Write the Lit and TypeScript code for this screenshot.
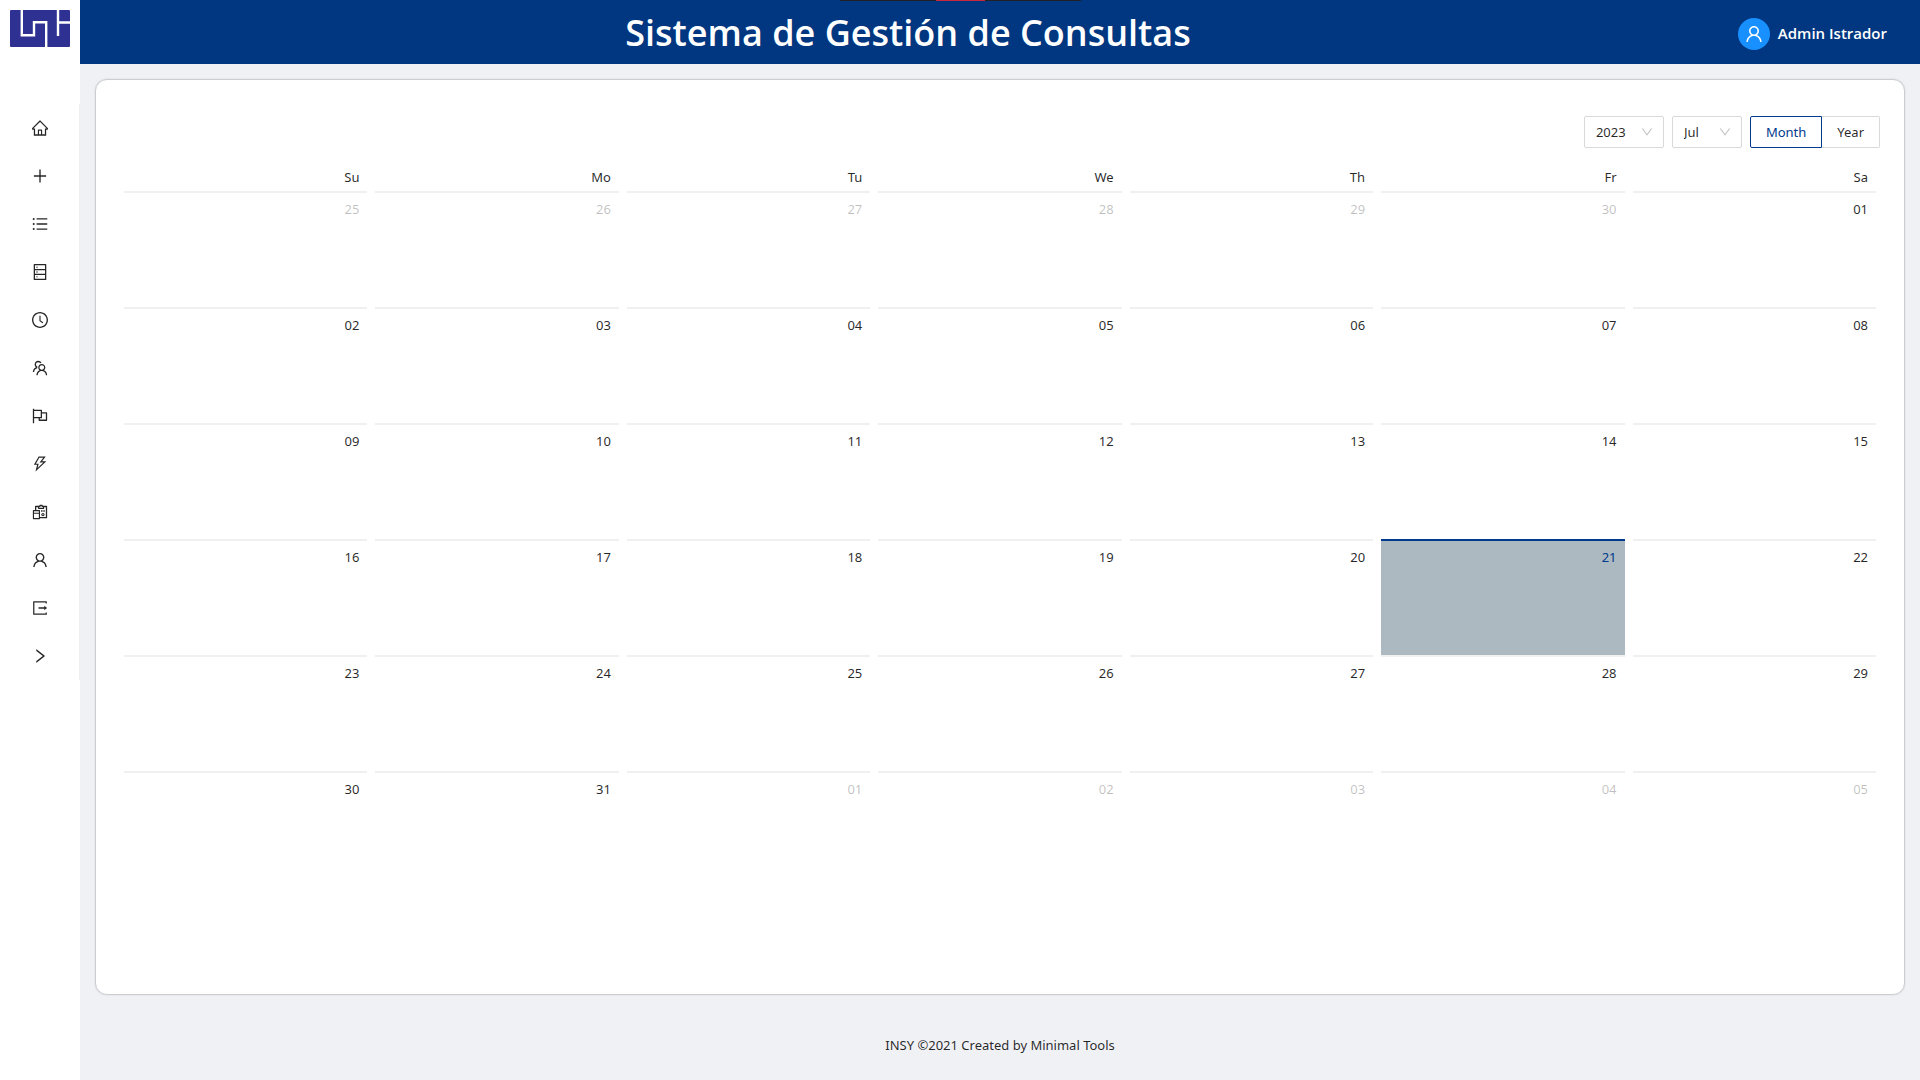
import { LitElement, html, css, svg } from "lit";
import { customElement, property, state } from "lit/decorators.js";
import { classMap } from "lit/directives/class-map.js";

const ICONS: Record<string, string> = {
  home: "M946.5 505L560.1 118.8l-25.9-25.9a31.5 31.5 0 00-44.4 0L77.5 505a63.9 63.9 0 00-18.8 46c.4 35.2 29.7 63.3 64.9 63.3h42.5V940h691.8V614.3h43.4c17.1 0 33.2-6.7 45.3-18.8a63.6 63.6 0 0018.7-45.3c0-17-6.7-33.1-18.8-45.2zM568 868H456V664h112v204zm217.9-325.7V868H632V640c0-22.1-17.9-40-40-40H432c-22.1 0-40 17.9-40 40v228H238.1V542.3h-96l370-369.7 23.1 23.1L882 542.3h-96.1z",
  plus: "M482 152h60q8 0 8 8v704q0 8-8 8h-60q-8 0-8-8V160q0-8 8-8z M176 474h672q8 0 8 8v60q0 8-8 8H176q-8 0-8-8v-60q0-8 8-8z",
  list: "M912 192H328c-4.4 0-8 3.6-8 8v56c0 4.4 3.6 8 8 8h584c4.4 0 8-3.6 8-8v-56c0-4.4-3.6-8-8-8zm0 284H328c-4.4 0-8 3.6-8 8v56c0 4.4 3.6 8 8 8h584c4.4 0 8-3.6 8-8v-56c0-4.4-3.6-8-8-8zm0 284H328c-4.4 0-8 3.6-8 8v56c0 4.4 3.6 8 8 8h584c4.4 0 8-3.6 8-8v-56c0-4.4-3.6-8-8-8zM104 228a56 56 0 10112 0 56 56 0 10-112 0zm0 284a56 56 0 10112 0 56 56 0 10-112 0zm0 284a56 56 0 10112 0 56 56 0 10-112 0z",
  database: "M832 64H192c-17.7 0-32 14.3-32 32v832c0 17.7 14.3 32 32 32h640c17.7 0 32-14.3 32-32V96c0-17.7-14.3-32-32-32zm-600 72h560v208H232V136zm560 480H232V408h560v208zm0 272H232V680h560v208zM304 240a40 40 0 1080 0 40 40 0 10-80 0zm0 272a40 40 0 1080 0 40 40 0 10-80 0zm0 272a40 40 0 1080 0 40 40 0 10-80 0z",
  clock: "M512 64C264.6 64 64 264.6 64 512s200.6 448 448 448 448-200.6 448-448S759.4 64 512 64zm0 820c-205.4 0-372-166.6-372-372s166.6-372 372-372 372 166.6 372 372-166.6 372-372 372z M686.7 638.6L544.1 535.5V288c0-4.4-3.6-8-8-8H488c-4.4 0-8 3.6-8 8v275.4c0 2.6 1.2 5 3.3 6.5l165.4 120.6c3.6 2.6 8.6 1.8 11.2-1.7l28.6-39c2.6-3.7 1.8-8.7-1.8-11.2z",
  team: "M824.2 699.9a301.55 301.55 0 00-86.4-60.4C783.1 602.8 812 546.8 812 484c0-110.8-92.4-201.7-203.2-200-109.1 1.7-197 90.6-197 200 0 62.8 29 118.8 74.2 155.5a300.95 300.95 0 00-86.4 60.4C345 754.6 314 826.8 312 903.8a8 8 0 008 8.2h56c4.3 0 7.9-3.4 8-7.7 1.9-58 25.4-112.3 66.7-153.5A226.62 226.62 0 01612 684c60.9 0 118.2 23.7 161.3 66.8C814.6 792 838 846.3 840 904.3c.1 4.3 3.7 7.7 8 7.7h56a8 8 0 008-8.2c-2-77-33-149.2-87.8-203.9zM612 612c-34.2 0-66.4-13.3-90.5-37.5a126.86 126.86 0 01-37.5-91.8c.3-32.8 13.4-64.5 36.3-88 24-24.6 56.1-38.3 90.4-38.7 33.9-.3 66.8 12.9 91 36.6 24.8 24.3 38.4 56.8 38.4 91.4 0 34.2-13.3 66.3-37.5 90.5A127.3 127.3 0 01612 612zM361.5 510.4c-.9-8.7-1.4-17.5-1.4-26.4 0-15.9 1.5-31.4 4.3-46.5.7-3.6-1.2-7.3-4.5-8.8-13.6-6.1-26.1-14.5-36.9-25.1a127.54 127.54 0 01-38.7-95.4c.9-32.1 13.8-62.6 36.3-85.6 24.7-25.3 57.9-39.1 93.2-38.7 31.9.3 62.7 12.6 86 34.4 7.9 7.4 14.7 15.6 20.4 24.4 2 3.1 5.9 4.4 9.3 3.2 17.6-6.1 36.2-10.4 55.3-12.4 5.6-.6 8.8-6.6 6.3-11.6-32.5-64.3-98.9-108.7-175.7-109.9-110.9-1.7-203.3 89.2-203.3 199.9 0 62.8 28.9 118.8 74.2 155.5-31.8 14.7-61.1 35-86.5 60.4-54.8 54.7-85.8 126.9-87.8 204a8 8 0 008 8.2h56.1c4.3 0 7.9-3.4 8-7.7 1.9-58 25.4-112.3 66.7-153.5 29.4-29.4 65.4-49.8 104.7-59.7 3.9-1 6.5-4.7 6-8.7z",
  flag: "M880 305H624V192c0-17.7-14.3-32-32-32H184v-40c0-4.4-3.6-8-8-8h-56c-4.4 0-8 3.6-8 8v784c0 4.4 3.6 8 8 8h56c4.4 0 8-3.6 8-8V640h248v113c0 17.7 14.3 32 32 32h416c17.7 0 32-14.3 32-32V337c0-17.7-14.3-32-32-32zM184 568V232h368v336H184zm656 145H504v-73h112c4.4 0 8-3.6 8-8V377h216v336z",
  bolt: "M848 359.3H627.7L825.8 109c4.1-5.3.4-13-6.3-13H436c-2.8 0-5.5 1.5-6.9 4L170 547.5c-3.1 5.3.7 12 6.9 12h174.4l-89.4 357.6c-1.9 7.8 7.5 13.3 13.3 7.7L853.5 373c5.2-4.9 1.7-13.7-5.5-13.7zM378.2 732.5l60.3-241H281.1l189.6-327.4h224.6L487 427.4h211L378.2 732.5z",
  reconciliation: "M676 565c-50.8 0-92 41.2-92 92s41.2 92 92 92 92-41.2 92-92-41.2-92-92-92zm0 126c-18.8 0-34-15.2-34-34s15.2-34 34-34 34 15.2 34 34-15.2 34-34 34zm204-523H668c0-30.9-25.1-56-56-56h-80c-30.9 0-56 25.1-56 56H264c-17.7 0-32 14.3-32 32v200h-88c-17.7 0-32 14.3-32 32v448c0 17.7 14.3 32 32 32h336c17.7 0 32-14.3 32-32v-16h368c17.7 0 32-14.3 32-32V200c0-17.7-14.3-32-32-32zm-412 64h72v-56h64v56h72v48H468v-48zm-20 616H176V616h272v232zm0-296H176v-88h272v88zm392 240H512V432c0-17.7-14.3-32-32-32H304V240h100v104h336V240h100v552zM704 408v96c0 4.4 3.6 8 8 8h48c4.4 0 8-3.6 8-8v-96c0-4.4-3.6-8-8-8h-48c-4.4 0-8 3.6-8 8zM592 512h48c4.4 0 8-3.6 8-8v-96c0-4.4-3.6-8-8-8h-48c-4.4 0-8 3.6-8 8v96c0 4.4 3.6 8 8 8z",
  user: "M858.5 763.6a374 374 0 00-80.6-119.5 375.63 375.63 0 00-119.5-80.6c-.4-.2-.8-.3-1.2-.5C719.5 518 760 444.7 760 362c0-137-111-248-248-248S264 225 264 362c0 82.7 40.5 156 102.8 201.1-.4.2-.8.3-1.2.5-44.8 18.9-85 46-119.5 80.6a375.63 375.63 0 00-80.6 119.5A371.7 371.7 0 00136 901.8a8 8 0 008 8.2h60c4.4 0 7.9-3.5 8-7.8 2-77.2 33-149.5 87.8-204.3 56.7-56.7 132-87.9 212.2-87.9s155.5 31.2 212.2 87.9C779 752.7 810 825 812 902.2c.1 4.4 3.6 7.8 8 7.8h60a8 8 0 008-8.2c-1-47.8-10.9-94.3-29.5-138.2zM512 534c-45.9 0-89.1-17.9-121.6-50.4S340 407.9 340 362c0-45.9 17.9-89.1 50.4-121.6S466.1 190 512 190s89.1 17.9 121.6 50.4S684 316.1 684 362c0 45.9-17.9 89.1-50.4 121.6S557.9 534 512 534z",
  export: "M888.3 757.4h-53.8c-4.2 0-7.7 3.5-7.7 7.7v61.8H197.1V197.1h629.8v61.8c0 4.2 3.5 7.7 7.7 7.7h53.8c4.2 0 7.7-3.4 7.7-7.7V158.7c0-17-13.7-30.7-30.7-30.7H158.7c-17 0-30.7 13.7-30.7 30.7v706.6c0 17 13.7 30.7 30.7 30.7h706.6c17 0 30.7-13.7 30.7-30.7V765.1c0-4.3-3.5-7.7-7.7-7.7zm18.6-251.7L765 393.7c-5.3-4.2-13-.4-13 6.3v76H438c-4.4 0-8 3.6-8 8v56c0 4.4 3.6 8 8 8h314v76c0 6.7 7.8 10.5 13 6.3l141.9-112a8 8 0 000-12.6z",
  right: "M765.7 486.8L314.9 134.7A7.97 7.97 0 00302 141v77.3c0 4.9 2.3 9.6 6.1 12.6l360 281.1-360 281.1c-3.9 3-6.1 7.7-6.1 12.6V883c0 6.7 7.7 10.4 12.9 6.3l450.8-352.1a31.96 31.96 0 000-50.4z",
  down: "M884 256h-75c-5.1 0-9.9 2.5-12.9 6.6L512 654.2 227.9 262.6c-3-4.1-7.8-6.6-12.9-6.6h-75c-6.5 0-10.3 7.4-6.5 12.7l352.6 486.1c12.8 17.6 39 17.6 51.7 0l352.6-486.1c3.9-5.3.1-12.7-6.4-12.7z",
};

const icon = (name: string) => html`
  <svg class="icon" viewBox="64 64 896 896" fill="currentColor" aria-hidden="true">
    ${svg`<path d=${ICONS[name]}></path>`}
  </svg>
`;

@customElement("side-nav")
export class SideNav extends LitElement {
  static styles = css`
    :host {
      display: block;
      background: #fff;
    }
    .logo {
      display: block;
      width: 60px;
      height: 37px;
      margin: 10px 10px 57px;
    }
    .menu {
      list-style: none;
      margin: 0;
      padding: 0;
      border-right: 1px solid #f0f0f0;
    }
    .link {
      display: flex;
      align-items: center;
      justify-content: center;
      width: 100%;
      height: 48px;
      padding: 0 0 0 1px;
      box-sizing: border-box;
      border: 0;
      background: none;
      color: rgba(0, 0, 0, 0.85);
      cursor: pointer;
    }
    .icon {
      width: 16px;
      height: 16px;
    }
  `;

  private links = [
    ["home", "Inicio"],
    ["plus", "Nueva consulta"],
    ["list", "Consultas"],
    ["database", "Registros"],
    ["clock", "Horarios"],
    ["team", "Grupos"],
    ["flag", "Reportes"],
    ["bolt", "Actividades"],
    ["reconciliation", "Asignaturas"],
    ["user", "Perfil"],
    ["export", "Salir"],
  ];

  render() {
    return html`
      <svg class="logo" viewBox="0 0 60 37" role="img" aria-label="UNI">
        <rect width="60" height="37" rx="1" fill="#2e3192"></rect>
        <g fill="none" stroke="#fff" stroke-width="2.400">
          <path d="M11.800 0V25.300H24V12.200H36.200V37"></path>
          <path d="M48 0V26M48 12.500H60"></path>
        </g>
      </svg>
      <nav>
        <ul class="menu">
          ${this.links.map(
            ([name, label]) => html`
              <li><a class="link" href="#${name}" aria-label=${label}>${icon(name)}</a></li>
            `
          )}
          <li><button class="link" type="button" aria-label="Expandir">${icon("right")}</button></li>
        </ul>
      </nav>
    `;
  }
}

@customElement("top-bar")
export class TopBar extends LitElement {
  static styles = css`
    :host {
      position: relative;
      display: grid;
      grid-template-columns: 9fr 1fr;
      align-items: center;
      height: 64px;
      padding-top: 2px;
      box-sizing: border-box;
      background: #003780;
      color: #fff;
      font-family: "Open Sans", "Noto Sans", sans-serif;
    }
    .title {
      margin: 0;
      text-align: center;
      font-size: 36px;
      line-height: 44px;
      font-weight: 600;
      white-space: nowrap;
    }
    .user {
      display: flex;
      align-items: center;
      justify-content: flex-end;
      gap: 8px;
      padding-right: 33px;
      font-size: 15px;
      font-weight: 600;
      white-space: nowrap;
    }
    .avatar {
      display: grid;
      place-items: center;
      width: 32px;
      height: 32px;
      margin-top: 2px;
      border-radius: 50%;
      background: #1890ff;
    }
    .icon {
      width: 18px;
      height: 18px;
    }
    .handle {
      position: absolute;
      top: 0;
      left: calc(50% - 160px);
      width: 241px;
      height: 1px;
      background: linear-gradient(to right, #202124 40%, #c8283c 40% 60%, #202124 60%);
    }
  `;

  render() {
    return html`
      <div class="handle"></div>
      <h1 class="title">Sistema de Gestión de Consultas</h1>
      <div class="user">
        <span class="avatar">${icon("user")}</span>
        <span>Admin Istrador</span>
      </div>
    `;
  }
}

@customElement("month-calendar")
export class MonthCalendar extends LitElement {
  @property({ type: Number }) year = 2023;
  @property({ type: Number }) month = 6;
  @property({ type: Number }) selected = 21;
  @state() private mode = "Month";

  static styles = css`
    :host {
      display: block;
    }
    .toolbar {
      display: flex;
      justify-content: flex-end;
      gap: 8px;
      padding: 12px 0;
    }
    .picker {
      display: grid;
      align-items: center;
      width: 80px;
    }
    .picker.short {
      width: 70px;
    }
    .select,
    .picker .icon {
      grid-area: 1 / 1;
    }
    .select {
      appearance: none;
      width: 100%;
      height: 32px;
      margin: 0;
      padding: 0 11px;
      border: 1px solid #d9d9d9;
      border-radius: 2px;
      background: #fff;
      color: rgba(0, 0, 0, 0.85);
      font: inherit;
    }
    .picker .icon {
      justify-self: end;
      width: 12px;
      height: 12px;
      margin-right: 11px;
      color: rgba(0, 0, 0, 0.25);
      pointer-events: none;
    }
    .modes {
      display: flex;
      margin: 0;
      padding: 0;
      border: 0;
    }
    .mode {
      display: flex;
      align-items: center;
      height: 32px;
      padding: 0 15px;
      box-sizing: border-box;
      border: 1px solid #d9d9d9;
      border-radius: 0 2px 2px 0;
      cursor: pointer;
    }
    .mode:first-of-type {
      border-radius: 2px 0 0 2px;
    }
    .mode + .mode {
      border-left: 0;
    }
    .mode.on {
      border: 1px solid #003a8c;
      color: #003a8c;
    }
    .radio {
      appearance: none;
      width: 0;
      height: 0;
      margin: 0;
    }
    .grid {
      width: 100%;
      margin: 8px 0;
      border-collapse: collapse;
      table-layout: fixed;
    }
    .weekday {
      padding: 0 12px 5px 0;
      line-height: 18px;
      font-weight: 400;
      text-align: right;
    }
    .day {
      padding: 0;
    }
    .date {
      height: 116px;
      margin: 0 4px;
      padding: 4px 8px 0;
      box-sizing: border-box;
      border-top: 2px solid #f0f0f0;
      line-height: 24px;
      text-align: right;
    }
    .outside {
      color: rgba(0, 0, 0, 0.25);
    }
    .current {
      border-color: #003a8c;
      background: #adb9c1;
      color: #003a8c;
    }
  `;

  private get weeks() {
    const lead = new Date(this.year, this.month, 1).getDay();
    return Array.from({ length: 6 }, (_, w) =>
      Array.from({ length: 7 }, (_, d) => new Date(this.year, this.month, 1 - lead + w * 7 + d))
    );
  }

  private dayCell(date: Date) {
    const outside = date.getMonth() !== this.month;
    const current = !outside && date.getDate() === this.selected;
    return html`
      <td class="day">
        <div class=${classMap({ date: true, outside, current })}>
          ${String(date.getDate()).padStart(2, "0")}
        </div>
      </td>
    `;
  }

  render() {
    return html`
      <div class="toolbar">
        <div class="picker">
          <select class="select" aria-label="Year">
            <option>2023</option>
          </select>
          ${icon("down")}
        </div>
        <div class="picker short">
          <select class="select" aria-label="Month">
            <option>Jul</option>
          </select>
          ${icon("down")}
        </div>
        <fieldset class="modes" aria-label="Mode">
          ${["Month", "Year"].map(
            (mode) => html`
              <label class=${classMap({ mode: true, on: this.mode === mode })}>
                <input
                  class="radio"
                  type="radio"
                  name="mode"
                  .checked=${this.mode === mode}
                  @change=${() => (this.mode = mode)}
                />${mode}
              </label>
            `
          )}
        </fieldset>
      </div>
      <table class="grid">
        <thead>
          <tr>
            ${["Su", "Mo", "Tu", "We", "Th", "Fr", "Sa"].map(
              (d) => html`<th class="weekday" scope="col">${d}</th>`
            )}
          </tr>
        </thead>
        <tbody>
          ${this.weeks.map((week) => html`<tr>${week.map((d) => this.dayCell(d))}</tr>`)}
        </tbody>
      </table>
    `;
  }
}

@customElement("app-root")
export class AppRoot extends LitElement {
  static styles = css`
    :host {
      display: grid;
      grid-template-columns: 80px minmax(0, 1fr);
      min-height: 100vh;
      background: #f0f1f5;
      color: rgba(0, 0, 0, 0.85);
      font-family: "Noto Sans", "Open Sans", sans-serif;
      font-size: 13px;
      line-height: 22px;
    }
    .page {
      display: flex;
      flex-direction: column;
    }
    .card {
      flex: 1;
      margin: 15px 15px 0;
      padding: 24px;
      border: 1px solid #cccdd1;
      border-radius: 12px;
      background: #fff;
      box-shadow: 0 0 2px rgba(0, 0, 0, 0.12);
    }
    .footer {
      margin-top: 15px;
      padding: 24px 48px;
      text-align: center;
    }
  `;

  render() {
    return html`
      <side-nav></side-nav>
      <div class="page">
        <top-bar></top-bar>
        <main class="card"><month-calendar></month-calendar></main>
        <footer class="footer">INSY ©2021 Created by Minimal Tools</footer>
      </div>
    `;
  }
}
